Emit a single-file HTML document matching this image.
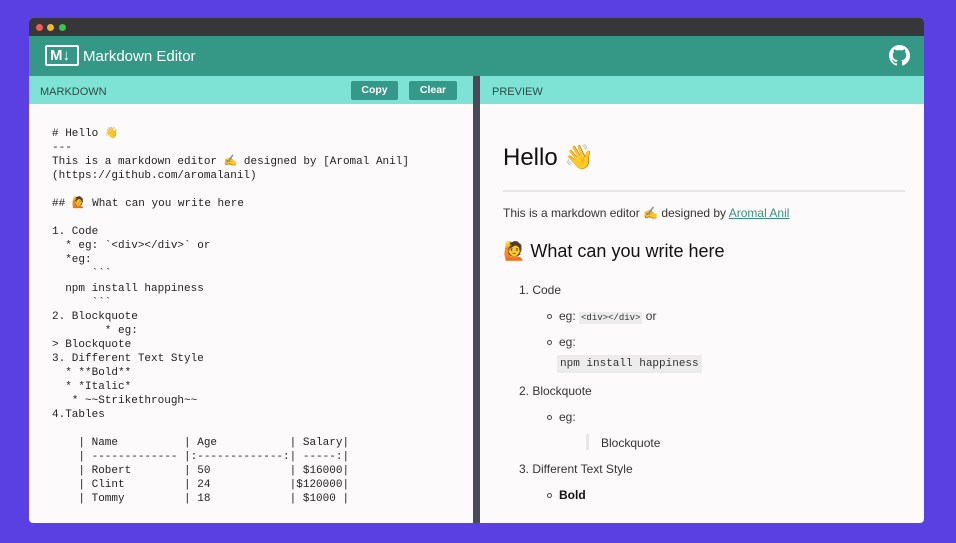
<!DOCTYPE html>
<html><head><meta charset="utf-8"><style>
*{margin:0;padding:0;box-sizing:border-box}
body{width:956px;height:543px;background:#5a3fe2;position:relative;overflow:hidden;font-family:"Liberation Sans",sans-serif}
.win{position:absolute;left:29px;top:18px;width:895px;height:505px;background:#fdfafb;border-radius:4px;overflow:hidden}
.tb{position:absolute;left:0;top:0;width:100%;height:18px;background:#373739}
.dot{position:absolute;top:6px;width:7px;height:7px;border-radius:50%}
.hd{position:absolute;left:0;top:18px;width:100%;height:40px;background:#359887}
.sub{position:absolute;top:58px;height:28px;background:#7ee3d4;font-size:11px;color:#2d4a48}
.btn{position:absolute;top:5px;height:19px;background:#35998a;color:#fff;font-weight:bold;font-size:10.5px;text-align:center;line-height:19px;border-radius:2px}
pre{position:absolute;left:23px;top:109px;font-family:"Liberation Mono","Noto Sans CJK JP",monospace;font-size:11px;line-height:14.05px;color:#222}
.p{position:absolute;color:#333;font-size:12px;white-space:nowrap}
.c{position:absolute;width:5px;height:5px;border:1px solid #444;border-radius:50%}
code{font-family:"Liberation Mono",monospace;background:#ececec}
</style></head><body>
<div class="win">
<div class="tb"><div class="dot" style="left:7px;background:#f25c55"></div><div class="dot" style="left:18px;background:#f5b630"></div><div class="dot" style="left:30px;background:#34c748"></div></div>
<div class="hd">
<div style="position:absolute;left:16px;top:9px;width:34px;height:21px;border:2px solid #fff;border-radius:2px;color:#fff;font-weight:bold;font-size:15px;line-height:17px;padding-left:3px">M&#8595;</div>
<div style="position:absolute;left:54px;top:12px;color:#fff;font-size:15px">Markdown Editor</div>
<svg style="position:absolute;left:860px;top:9px" width="21" height="21" viewBox="0 0 16 16"><path fill="#fff" d="M8 0C3.58 0 0 3.58 0 8c0 3.540 2.290 6.530 5.470 7.590.4.07.55-.17.55-.38v-1.33c-2.230.48-2.700-1.070-2.700-1.070-.36-.92-.89-1.170-.89-1.170-.73-.5.06-.49.06-.49.8.06 1.230.83 1.230.83.71 1.220 1.870.87 2.330.66.07-.52.28-.87.5-1.070-1.780-.2-3.650-.89-3.650-3.950 0-.87.31-1.590.82-2.150-.08-.2-.36-1.020.08-2.120 0 0 .67-.21 2.200.82a7.600 7.600 0 014 0c1.530-1.040 2.200-.82 2.200-.82.44 1.100.16 1.920.08 2.120.51.56.82 1.270.82 2.150 0 3.070-1.870 3.750-3.650 3.950.29.25.54.73.54 1.480v2.200c0 .21.15.46.55.38A8 8 0 0016 8c0-4.420-3.580-8-8-8z"/></svg>
</div>
<div class="sub" style="left:0;width:444px"><span style="position:absolute;left:11px;top:10px">MARKDOWN</span>
<div class="btn" style="left:322px;width:47px">Copy</div><div class="btn" style="left:380px;width:48px">Clear</div></div>
<div style="position:absolute;left:444px;top:58px;width:7px;height:447px;background:#4a4a56"></div>
<div class="sub" style="left:451px;width:444px"><span style="position:absolute;left:12px;top:10px">PREVIEW</span></div>
<pre># Hello 👋
---
This is a markdown editor ✍️ designed by [Aromal Anil]
(https://github.com/aromalanil)

## 🙋 What can you write here

1. Code
  * eg: &#96;&lt;div&gt;&lt;/div&gt;&#96; or
  *eg:
      &#96;&#96;&#96;
  npm install happiness
      &#96;&#96;&#96;
2. Blockquote
        * eg:
&gt; Blockquote
3. Different Text Style
  * **Bold**
  * *Italic*
   * ~~Strikethrough~~
4.Tables

    | Name          | Age           | Salary|
    | ------------- |:-------------:| -----:|
    | Robert        | 50            | $16000|
    | Clint         | 24            |$120000|
    | Tommy         | 18            | $1000 |</pre>
<div class="p" style="left:474px;top:125px;font-size:24px;color:#111">Hello 👋</div>
<div style="position:absolute;left:474px;top:172px;width:402px;height:2px;background:#e6e6e6"></div>
<div class="p" style="left:474px;top:188px">This is a markdown editor ✍️ designed by <span style="color:#3a8f80;text-decoration:underline">Aromal Anil</span></div>
<div class="p" style="left:474px;top:223px;font-size:18px;color:#111">🙋 What can you write here</div>
<div class="p" style="left:490px;top:265px">1. Code</div>
<div class="c" style="left:518px;top:296px"></div><div class="p" style="left:530px;top:291px">eg: <code style="font-size:9px;padding:1px 2px">&lt;div&gt;&lt;/div&gt;</code> or</div>
<div class="c" style="left:518px;top:322px"></div><div class="p" style="left:530px;top:317px">eg:</div>
<div class="p" style="left:528px;top:337px;height:18px;background:#ececec;padding:3px 3px;font-family:'Liberation Mono',monospace;font-size:11px">npm install happiness</div>
<div class="p" style="left:490px;top:366px">2. Blockquote</div>
<div class="c" style="left:518px;top:397px"></div><div class="p" style="left:530px;top:392px">eg:</div>
<div style="position:absolute;left:557px;top:416px;width:3px;height:16px;background:#e6e6e6"></div><div class="p" style="left:572px;top:418px">Blockquote</div>
<div class="p" style="left:490px;top:444px">3. Different Text Style</div>
<div class="c" style="left:518px;top:475px"></div><div class="p" style="left:530px;top:470px;font-weight:bold;color:#111">Bold</div>
</div>
</body></html>
